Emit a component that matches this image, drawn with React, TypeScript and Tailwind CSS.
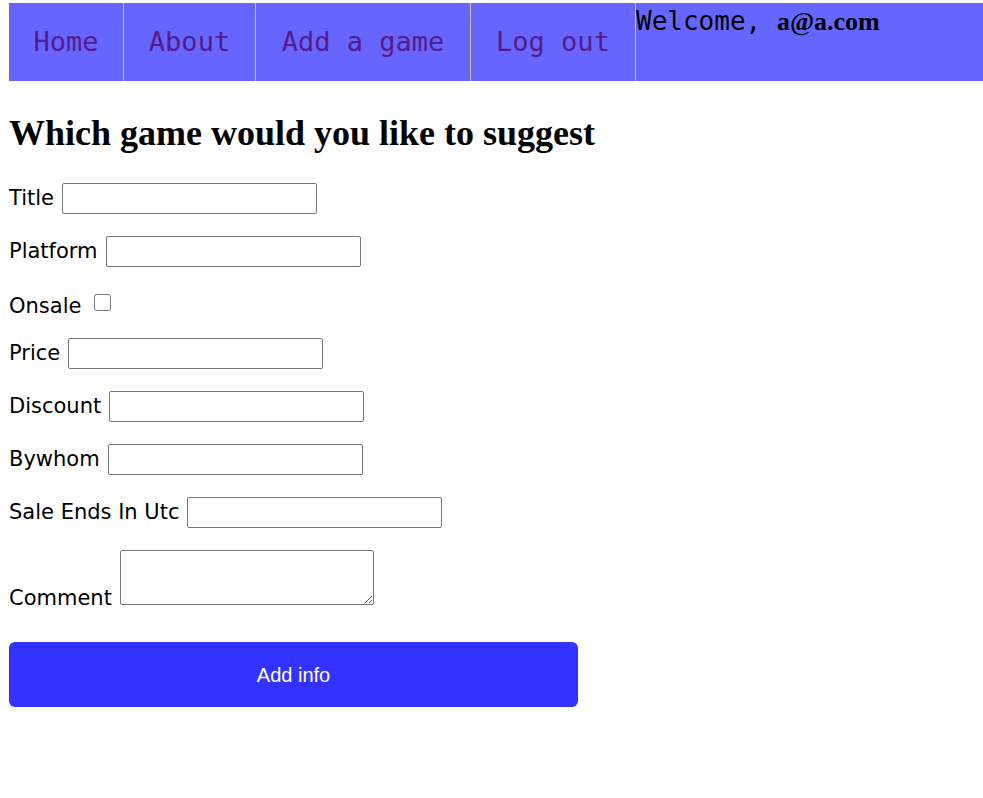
const navLinks = [
  { label: "Home", width: "w-[115px]" },
  { label: "About", width: "w-[132px]" },
  { label: "Add a game", width: "w-[215px]" },
  { label: "Log out", width: "w-[165px]" },
];

const fields = ["Title", "Platform"];
const moreFields = ["Price", "Discount", "Bywhom", "Sale Ends In Utc"];

function TextRow({ label }: { label: string }) {
  return (
    <div className="flex items-center gap-[8px] h-[31px]">
      <label className="whitespace-nowrap">{label}</label>
      <input
        type="text"
        className="w-[255px] h-[31px] border border-[#767676] rounded-[2px] bg-white"
      />
    </div>
  );
}

export default function App() {
  return (
    <div className="min-h-screen bg-white pl-[9px] pt-[3px]">
      <nav className="flex w-[974px] h-[78px] bg-[#6666ff] font-['DejaVu_Sans_Mono',monospace]">
        {navLinks.map((link) => (
          <a
            key={link.label}
            href="#"
            className={`${link.width} flex items-center justify-center border-r border-[#c0c0c0] text-[27px] text-[#551a8b] whitespace-pre`}
          >
            {link.label}
          </a>
        ))}
        <div className="flex-1 pt-[5px] leading-none whitespace-pre">
          <span className="text-[26px] text-black">Welcome, </span>
          <span className="text-[26px] font-bold font-['Liberation_Serif',serif]">
            a@a.com
          </span>
        </div>
      </nav>

      <h1 className="mt-[32px] text-[36px] font-bold leading-[40px] font-['Liberation_Serif',serif] text-black">
        Which game would you like to suggest
      </h1>

      <form className="mt-[30px] flex flex-col font-['DejaVu_Sans',Verdana,sans-serif] text-[21px] text-black">
        <div className="flex flex-col gap-[22px]">
          {fields.map((f) => (
            <TextRow key={f} label={f} />
          ))}
        </div>
        <div className="flex items-center gap-[13px] mt-[28px] h-[24px]">
          <label>Onsale</label>
          <input type="checkbox" className="w-[17px] h-[17px] mt-[-9px]" />
        </div>
        <div className="flex flex-col gap-[22px] mt-[19px]">
          {moreFields.map((f) => (
            <TextRow key={f} label={f} />
          ))}
        </div>
        <div className="flex items-end gap-[8px] mt-[22px]">
          <label className="leading-none mb-[-4px]">Comment</label>
          <textarea className="w-[254px] h-[55px] border border-[#767676] rounded-[2px] resize-y" />
        </div>
        <button
          type="button"
          className="mt-[37px] w-[569px] h-[65px] rounded-[6px] bg-[#3333ff] text-white text-[20px] font-['Liberation_Sans',Arial,sans-serif]"
        >
          Add info
        </button>
      </form>
    </div>
  );
}
